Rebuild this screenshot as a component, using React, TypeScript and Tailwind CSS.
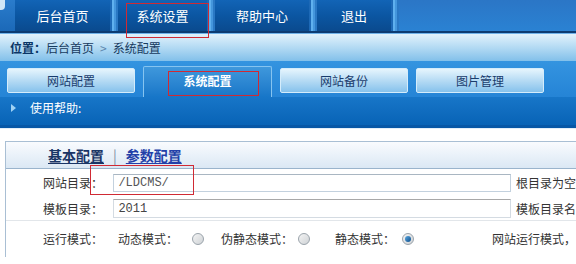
const navItems = [
  { label: "后台首页", w: "w-[95px]" },
  { label: "系统设置", w: "w-[89px]" },
  { label: "帮助中心", w: "w-[94px]" },
  { label: "退出", w: "w-[74px]" },
];

const tabs = ["网站配置", "系统配置", "网站备份", "图片管理"];

const NavSep = () => (
  <div className="h-full w-[8px] flex bg-gradient-to-b from-[#3d8fd8] to-[#2f7fcc]">
    <div className="w-[2px] bg-[#1d69b6]" />
    <div className="w-[2px] bg-[#5fb0ee]" />
    <div className="w-[2px] bg-[#4496dc]" />
    <div className="w-[2px] bg-[#2a78c4]" />
  </div>
);

const Radio = ({ checked = false }: { checked?: boolean }) => (
  <span className="w-[12px] h-[12px] rounded-full border border-[#9aa3ab] bg-gradient-to-br from-[#f4f4f4] to-[#cfd3d6] flex items-center justify-center shrink-0">
    {checked && (
      <span className="w-[6px] h-[6px] rounded-full bg-gradient-to-br from-[#5aa8e0] to-[#0c4f8c]" />
    )}
  </span>
);

const RedBox = ({ cls }: { cls: string }) => (
  <div className={`absolute border border-[#d02a34] pointer-events-none ${cls}`} />
);

const App = () => {
  return (
    <div
      className="relative w-[576px] h-[264px] overflow-hidden bg-white text-[12px] leading-none"
      style={{ fontFamily: '"Noto Sans CJK SC", "Liberation Sans", sans-serif' }}
    >
      {/* top nav */}
      <div className="h-[31px] flex bg-gradient-to-b from-[#2b76c6] to-[#2a82d3]">
        <div className="w-[15px] h-full relative bg-gradient-to-b from-[#2a7ccc] to-[#1b69b8]">
          <div className="absolute left-0 top-0 w-[5px] h-[10px] bg-[#cfe6f7] rounded-br-[4px]" />
        </div>
        {navItems.map((item, i) => (
          <div key={item.label} className="flex h-full">
            <div
              className={`${item.w} h-full flex items-center justify-center text-white text-[13px] bg-gradient-to-b from-[#1264b6] via-[#0b56a2] to-[#0a4a8e]`}
            >
              {item.label}
            </div>
            {i < navItems.length && <NavSep />}
          </div>
        ))}
        <div className="flex-1" />
      </div>
      <div className="h-[2px] bg-[#0c3b72]" />
      <div className="h-[1px] bg-[#6fb2ea]" />

      {/* breadcrumb */}
      <div className="h-[27px] flex items-center pl-[10px] bg-gradient-to-b from-[#e2f2fc] via-[#b3daf3] to-[#82c0ea] text-[#173a5e]">
        <span className="font-bold text-[#0a3566]">位置：</span>
        <span>后台首页</span>
        <span className="mx-[6px] text-[#5d87ad]">&gt;</span>
        <span>系统配置</span>
      </div>

      {/* tabs */}
      <div className="h-[36px] flex items-end gap-[8px] pl-[7px] bg-gradient-to-b from-[#3494e0] to-[#2584d6]">
        {tabs.map((t, i) =>
          i === 1 ? (
            <div
              key={t}
              className="w-[129px] h-[31px] flex items-center justify-center pb-[3px] text-white font-bold border-t border-l border-r border-[#86c4f0] rounded-t-[2px] bg-gradient-to-b from-[#3f98dc] to-[#1776c8]"
            >
              {t}
            </div>
          ) : (
            <div
              key={t}
              className="w-[128px] h-[25px] mb-[4px] flex items-center justify-center text-[#1a3c6c] border border-[#d4ecfb] rounded-[2px] bg-gradient-to-b from-[#e6f5fd] via-[#b6dbf4] to-[#86c2ec]"
            >
              {t}
            </div>
          )
        )}
      </div>

      {/* help strip */}
      <div className="h-[28px] flex items-start pt-[2px] bg-gradient-to-b from-[#1776c8] to-[#0863b6] text-white">
        <div className="h-[18px] flex items-center">
          <span className="ml-[11px] w-0 h-0 border-y-[4px] border-y-transparent border-l-[5px] border-l-[#9fd2f4]" />
          <span className="ml-[14px]">使用帮助:</span>
        </div>
      </div>
      <div className="h-[3px] bg-[#0757a6]" />
      <div className="h-[1px] bg-[#e3eef8]" />

      {/* content */}
      <div className="pt-[12px] pl-[5px]">
        <div className="border-t border-l border-[#a9bfd4]">
          <div className="h-[27px] flex items-center pl-[42px] border-b border-[#9ab4cc] bg-gradient-to-b from-[#f9fbfe] to-[#dbe8f4] text-[14px] font-bold">
            <span className="text-[#1a3565] underline underline-offset-2">基本配置</span>
            <span className="mx-[9px] text-[#7d8fa3] font-normal">|</span>
            <span className="text-[#2240a8] underline underline-offset-2">参数配置</span>
          </div>

          <div className="h-[28px] flex items-center pl-[37px] text-[#333]">
            <span className="w-[73px]">网站目录：</span>
            <div className="w-[412px] h-[18px] flex items-center pl-[4px] border border-[#c3d1de] border-t-[#a9b6c2]">
              <span className="text-[#555]" style={{ fontFamily: '"Liberation Mono", monospace' }}>
                /LDCMS/
              </span>
            </div>
            <span className="ml-[5px] whitespace-nowrap">根目录为空</span>
          </div>

          <div className="h-[24px] flex items-center pl-[37px] border-b border-[#e2e6ea] text-[#333]">
            <span className="w-[73px]">模板目录：</span>
            <div className="w-[412px] h-[19px] flex items-center pl-[4px] border border-[#d4dbe2] border-t-[#a8a8a8]">
              <span className="text-[#444]" style={{ fontFamily: '"Liberation Mono", monospace' }}>
                2011
              </span>
            </div>
            <span className="ml-[5px] whitespace-nowrap">模板目录名</span>
          </div>

          <div className="h-[36px] flex items-center pl-[37px] text-[#333] whitespace-nowrap">
            <span className="w-[75px]">运行模式：</span>
            <span className="w-[74px]">动态模式：</span>
            <Radio />
            <span className="ml-[17px] w-[77px]">伪静态模式：</span>
            <Radio />
            <span className="ml-[25px] w-[67px]">静态模式：</span>
            <Radio checked />
            <span className="ml-[78px]">网站运行模式，</span>
          </div>
        </div>
      </div>

      {/* annotation boxes */}
      <RedBox cls="left-[126px] top-[3px] w-[83px] h-[35px]" />
      <RedBox cls="left-[168px] top-[71px] w-[91px] h-[25px]" />
      <RedBox cls="left-[90px] top-[165px] w-[104px] h-[30px]" />
    </div>
  );
};

export default App;
